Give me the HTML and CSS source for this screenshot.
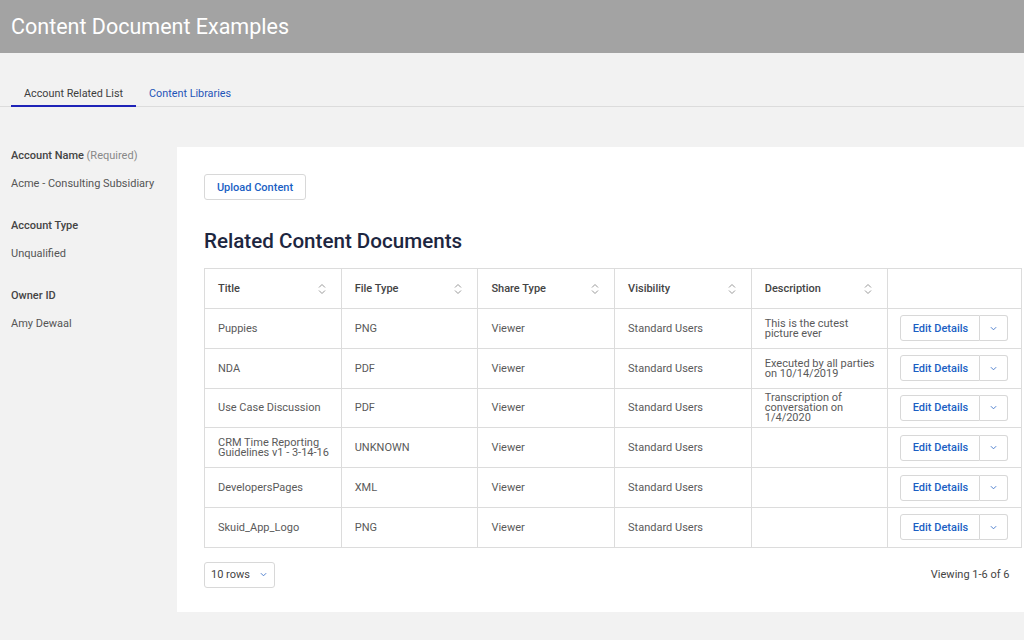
FILE: index.html
```html
<!DOCTYPE html>
<html>
<head>
<meta charset="utf-8">
<link rel="stylesheet" href="styles.css">
</head>
<body>
<header class="topbar"><h1 class="page-title">Content Document Examples</h1></header>
<nav class="tabs">
  <a class="tab active">Account Related List</a>
  <a class="tab">Content Libraries</a>
</nav>
<main class="layout">
  <aside class="sidebar">
    <div class="field">
      <div class="label">Account Name <span class="req">(Required)</span></div>
      <div class="value">Acme - Consulting Subsidiary</div>
    </div>
    <div class="field">
      <div class="label">Account Type</div>
      <div class="value">Unqualified</div>
    </div>
    <div class="field">
      <div class="label">Owner ID</div>
      <div class="value">Amy Dewaal</div>
    </div>
  </aside>
  <section class="panel">
    <button class="btn upload">Upload Content</button>
    <h2 class="section-title">Related Content Documents</h2>
    <table class="grid">
      <colgroup>
        <col class="c"><col class="c"><col class="c"><col class="c"><col class="c"><col class="c-last">
      </colgroup>
      <thead>
        <tr>
          <th><div class="th-in"><span>Title</span><svg class="sort" viewBox="0 0 8 12"><path d="M1 4.5 L4 1.5 L7 4.5 M1 7.5 L4 10.5 L7 7.5"/></svg></div></th>
          <th><div class="th-in"><span>File Type</span><svg class="sort" viewBox="0 0 8 12"><path d="M1 4.5 L4 1.5 L7 4.5 M1 7.5 L4 10.5 L7 7.5"/></svg></div></th>
          <th><div class="th-in"><span>Share Type</span><svg class="sort" viewBox="0 0 8 12"><path d="M1 4.5 L4 1.5 L7 4.5 M1 7.5 L4 10.5 L7 7.5"/></svg></div></th>
          <th><div class="th-in"><span>Visibility</span><svg class="sort" viewBox="0 0 8 12"><path d="M1 4.5 L4 1.5 L7 4.5 M1 7.5 L4 10.5 L7 7.5"/></svg></div></th>
          <th><div class="th-in"><span>Description</span><svg class="sort" viewBox="0 0 8 12"><path d="M1 4.5 L4 1.5 L7 4.5 M1 7.5 L4 10.5 L7 7.5"/></svg></div></th>
          <th></th>
        </tr>
      </thead>
      <tbody>
        <tr>
          <td>Puppies</td><td>PNG</td><td>Viewer</td><td>Standard Users</td>
          <td class="desc"><span class="ln">This is the cutest</span><span class="ln">picture ever</span></td>
          <td class="act"><div class="split"><button class="split-main">Edit Details</button><button class="split-drop"><svg viewBox="0 0 8 5"><path d="M1 1 L4 4 L7 1"/></svg></button></div></td>
        </tr>
        <tr>
          <td>NDA</td><td>PDF</td><td>Viewer</td><td>Standard Users</td>
          <td class="desc"><span class="ln">Executed by all parties</span><span class="ln">on 10/14/2019</span></td>
          <td class="act"><div class="split"><button class="split-main">Edit Details</button><button class="split-drop"><svg viewBox="0 0 8 5"><path d="M1 1 L4 4 L7 1"/></svg></button></div></td>
        </tr>
        <tr>
          <td>Use Case Discussion</td><td>PDF</td><td>Viewer</td><td>Standard Users</td>
          <td class="desc"><span class="ln">Transcription of</span><span class="ln">conversation on</span><span class="ln">1/4/2020</span></td>
          <td class="act"><div class="split"><button class="split-main">Edit Details</button><button class="split-drop"><svg viewBox="0 0 8 5"><path d="M1 1 L4 4 L7 1"/></svg></button></div></td>
        </tr>
        <tr>
          <td class="desc"><span class="ln">CRM Time Reporting</span><span class="ln">Guidelines v1 - 3-14-16</span></td><td>UNKNOWN</td><td>Viewer</td><td>Standard Users</td>
          <td></td>
          <td class="act"><div class="split"><button class="split-main">Edit Details</button><button class="split-drop"><svg viewBox="0 0 8 5"><path d="M1 1 L4 4 L7 1"/></svg></button></div></td>
        </tr>
        <tr>
          <td>DevelopersPages</td><td>XML</td><td>Viewer</td><td>Standard Users</td>
          <td></td>
          <td class="act"><div class="split"><button class="split-main">Edit Details</button><button class="split-drop"><svg viewBox="0 0 8 5"><path d="M1 1 L4 4 L7 1"/></svg></button></div></td>
        </tr>
        <tr>
          <td>Skuid_App_Logo</td><td>PNG</td><td>Viewer</td><td>Standard Users</td>
          <td></td>
          <td class="act"><div class="split"><button class="split-main">Edit Details</button><button class="split-drop"><svg viewBox="0 0 8 5"><path d="M1 1 L4 4 L7 1"/></svg></button></div></td>
        </tr>
      </tbody>
    </table>
    <div class="footer">
      <div class="rows-select"><span>10 rows</span><svg viewBox="0 0 8 5"><path d="M1 1 L4 4 L7 1"/></svg></div>
      <div class="viewing">Viewing 1-6 of 6</div>
    </div>
  </section>
</main>
</body>
</html>
```
FILE: styles.css
```css
* { box-sizing: border-box; }
html, body { margin: 0; padding: 0; }
body {
  font-family: Roboto, "Noto Sans", "Liberation Sans", sans-serif;
  background: #f2f2f2;
  width: 1024px;
  height: 640px;
  overflow: hidden;
  color: #444;
}
.topbar {
  height: 53px;
  background: #a3a3a3;
  display: flex;
  align-items: center;
  padding: 0 0 1px 11px;
}
.page-title {
  margin: 0;
  color: #fff;
  font-size: 21.5px;
  font-weight: 400;
}
.tabs {
  margin: 27px 0 0 0;
  display: flex;
  padding-left: 11px;
  border-bottom: 1px solid #dcdcdc;
  height: 27px;
}
.tab {
  font-size: 10.8px;
  padding: 0 13px;
  height: 26px;
  display: flex;
  align-items: center;
  color: #1f55b8;
  cursor: pointer;
}
.tab.active {
  color: #3d3d3d;
  border-bottom: 2px solid #1e23b8;
  padding-top: 1px;
  height: 27px;
  margin-bottom: -1px;
}
.layout {
  display: flex;
  margin-top: 40px;
}
.sidebar {
  width: 177px;
  padding: 2px 0 0 11px;
  flex: none;
}
.field { margin-bottom: 28px; }
.label {
  font-size: 11px;
  line-height: 14px;
  color: #444;
  font-weight: 500;
}
.req { color: #888; font-weight: 400; }
.value {
  margin-top: 14px;
  font-size: 11px;
  line-height: 14px;
  color: #555;
}
.panel {
  flex: 1;
  background: #fff;
  padding: 27px 3px 25px 27px;
  height: 465px;
}
.btn {
  font-family: inherit;
  cursor: pointer;
}
.upload {
  display: block;
  height: 26px;
  width: 102px;
  border: 1px solid #d8d8d8;
  border-radius: 3px;
  background: #fff;
  color: #1b5fc4;
  font-size: 11px;
  font-weight: 500;
  padding: 0;
}
.section-title {
  margin: 28px 0 0 0;
  font-size: 20.6px;
  line-height: 26px;
  font-weight: 500;
  color: #1d2640;
}
.grid {
  margin-top: 14px;
  width: 818px;
  border-collapse: collapse;
  table-layout: fixed;
  font-size: 11px;
  color: #5a5a5a;
}
.grid col.c { width: 136.7px; }
.grid col.c-last { width: 134px; }
.grid th, .grid td {
  border: 1px solid #dcdcdc;
  padding: 0 0 0 13px;
  text-align: left;
  vertical-align: middle;
}
.grid th {
  height: 40px;
  font-weight: 500;
  color: #444;
}
.th-in {
  display: flex;
  align-items: center;
  justify-content: space-between;
  padding-right: 15px;
}
.sort {
  width: 8px;
  height: 12px;
  fill: none;
  stroke: #999;
  stroke-width: 1;
}
.grid tbody tr { height: 39.8px; }
.grid td { height: auto; padding-top: 0; padding-bottom: 0; }
.grid td.desc { padding-top: 1px; }
.ln {
  display: block;
  height: 10px;
  line-height: 10px;
  white-space: nowrap;
}
.grid td.act { padding-left: 12px; }
.split {
  display: flex;
  height: 26px;
  width: 108px;
}
.split-main {
  font-family: inherit;
  width: 80px;
  border: 1px solid #d8d8d8;
  border-radius: 3px 0 0 3px;
  background: #fff;
  color: #1b5fc4;
  font-size: 11px;
  font-weight: 500;
  padding: 0;
}
.split-drop {
  width: 28px;
  border: 1px solid #d8d8d8;
  border-left: none;
  border-radius: 0 3px 3px 0;
  background: #fff;
  padding: 0;
  display: flex;
  align-items: center;
  justify-content: center;
}
.split-drop svg, .rows-select svg {
  width: 7px;
  height: 5px;
  fill: none;
  stroke: #4a7ccc;
  stroke-width: 1.1;
}
.footer {
  margin-top: 14px;
  display: flex;
  justify-content: space-between;
  align-items: center;
  padding-right: 13px;
}
.rows-select {
  height: 26px;
  width: 71px;
  border: 1px solid #d8d8d8;
  border-radius: 3px;
  display: flex;
  align-items: center;
  justify-content: space-between;
  padding: 0 7px 0 6px;
  font-size: 11px;
  color: #444;
}
.viewing {
  font-size: 11px;
  color: #444;
}
```
